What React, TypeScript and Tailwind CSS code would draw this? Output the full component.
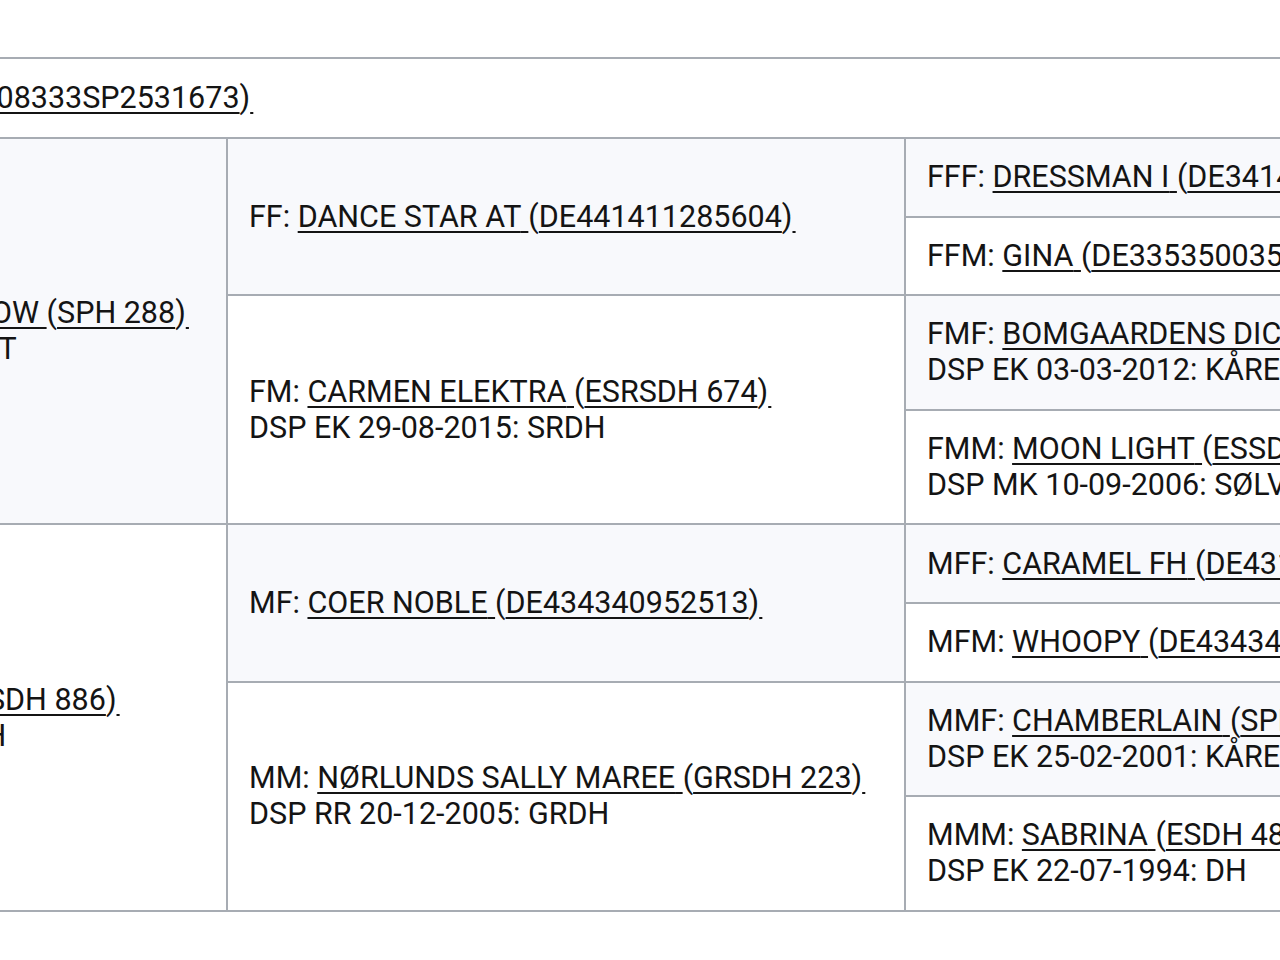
type Horse = {
  tag: string;
  name: string;
  ueln: string;
  note?: string;
};

const sire: Horse = { tag: "F", name: "DARK SHADOW", ueln: "SPH 288", note: "DSP GODKENDT" };
const dam: Horse = { tag: "M", name: "SONATA", ueln: "ESDH 886", note: "DSP EK: ESRDH" };

const link = "underline decoration-[1.5px] underline-offset-[4px]";

function Entry({ horse }: { horse: Horse }) {
  return (
    <>
      {horse.tag}:{" "}
      <a href="#" className={link}>
        {horse.name}{" "}
      </a>
      (
      <a href="#" className={link}>
        {horse.ueln}
      </a>
      )<span className={link}>{"\u200A"}</span>
      {horse.note && (
        <>
          <br />
          {horse.note}
        </>
      )}
    </>
  );
}

const cell = "border-2 border-[#a7acb3] px-[21px] py-[20.3px] align-middle";
const light = "bg-[#f8f9fc]";

export default function App() {
  return (
    <div
      className="w-full h-[960px] overflow-hidden bg-white text-[30.5px] leading-[36px] text-[#141414]"
      style={{ fontFamily: "Roboto, 'Noto Sans', sans-serif" }}
    >
      <div className="pt-[57px] ml-[-229px]">
        <table className="border-collapse table-fixed w-[1835px]">
          <colgroup>
            <col className="w-[455px]" />
            <col className="w-[678px]" />
            <col className="w-[702px]" />
          </colgroup>
          <tbody>
            <tr>
              <td colSpan={3} className={`${cell} py-[21px] whitespace-nowrap`}>
                <a href="#" className={link}>
                  LUCKY BOW{" "}
                </a>
                (
                <a href="#" className={link}>
                  208333SP2531673
                </a>
                )<span className={link}>{"\u200A"}</span>
              </td>
            </tr>

            {/* Father's side */}
            <tr>
              <td rowSpan={4} className={`${cell} ${light} whitespace-nowrap`}>
                <Entry horse={sire} />
              </td>
              <td rowSpan={2} className={`${cell} ${light}`}>
                <Entry horse={{ tag: "FF", name: "DANCE STAR AT", ueln: "DE441411285604" }} />
              </td>
              <td className={`${cell} ${light} whitespace-nowrap`}>
                <Entry horse={{ tag: "FFF", name: "DRESSMAN I", ueln: "DE341410213099" }} />
              </td>
            </tr>
            <tr>
              <td className={`${cell} whitespace-nowrap`}>
                <Entry horse={{ tag: "FFM", name: "GINA", ueln: "DE335350035601" }} />
              </td>
            </tr>
            <tr>
              <td rowSpan={2} className={cell}>
                <Entry
                  horse={{ tag: "FM", name: "CARMEN ELEKTRA", ueln: "ESRSDH 674", note: "DSP EK 29-08-2015: SRDH" }}
                />
              </td>
              <td className={`${cell} ${light} whitespace-nowrap`}>
                <Entry
                  horse={{
                    tag: "FMF",
                    name: "BOMGAARDENS DICTATOR",
                    ueln: "SPH 201",
                    note: "DSP EK 03-03-2012: KÅRET",
                  }}
                />
              </td>
            </tr>
            <tr>
              <td className={`${cell} whitespace-nowrap`}>
                <Entry
                  horse={{ tag: "FMM", name: "MOON LIGHT", ueln: "ESSDH 512", note: "DSP MK 10-09-2006: SØLV" }}
                />
              </td>
            </tr>

            {/* Mother's side */}
            <tr>
              <td rowSpan={4} className={`${cell} whitespace-nowrap`}>
                <Entry horse={dam} />
              </td>
              <td rowSpan={2} className={`${cell} ${light}`}>
                <Entry horse={{ tag: "MF", name: "COER NOBLE", ueln: "DE434340952513" }} />
              </td>
              <td className={`${cell} ${light} whitespace-nowrap`}>
                <Entry horse={{ tag: "MFF", name: "CARAMEL FH", ueln: "DE431310466500" }} />
              </td>
            </tr>
            <tr>
              <td className={`${cell} whitespace-nowrap`}>
                <Entry horse={{ tag: "MFM", name: "WHOOPY", ueln: "DE434340331902" }} />
              </td>
            </tr>
            <tr>
              <td rowSpan={2} className={cell}>
                <Entry
                  horse={{ tag: "MM", name: "NØRLUNDS SALLY MAREE", ueln: "GRSDH 223", note: "DSP RR 20-12-2005: GRDH" }}
                />
              </td>
              <td className={`${cell} ${light} whitespace-nowrap`}>
                <Entry
                  horse={{ tag: "MMF", name: "CHAMBERLAIN", ueln: "SPH 154", note: "DSP EK 25-02-2001: KÅRET" }}
                />
              </td>
            </tr>
            <tr>
              <td className={`${cell} whitespace-nowrap`}>
                <Entry
                  horse={{ tag: "MMM", name: "SABRINA", ueln: "ESDH 481", note: "DSP EK 22-07-1994: DH" }}
                />
              </td>
            </tr>
          </tbody>
        </table>
      </div>
    </div>
  );
}
